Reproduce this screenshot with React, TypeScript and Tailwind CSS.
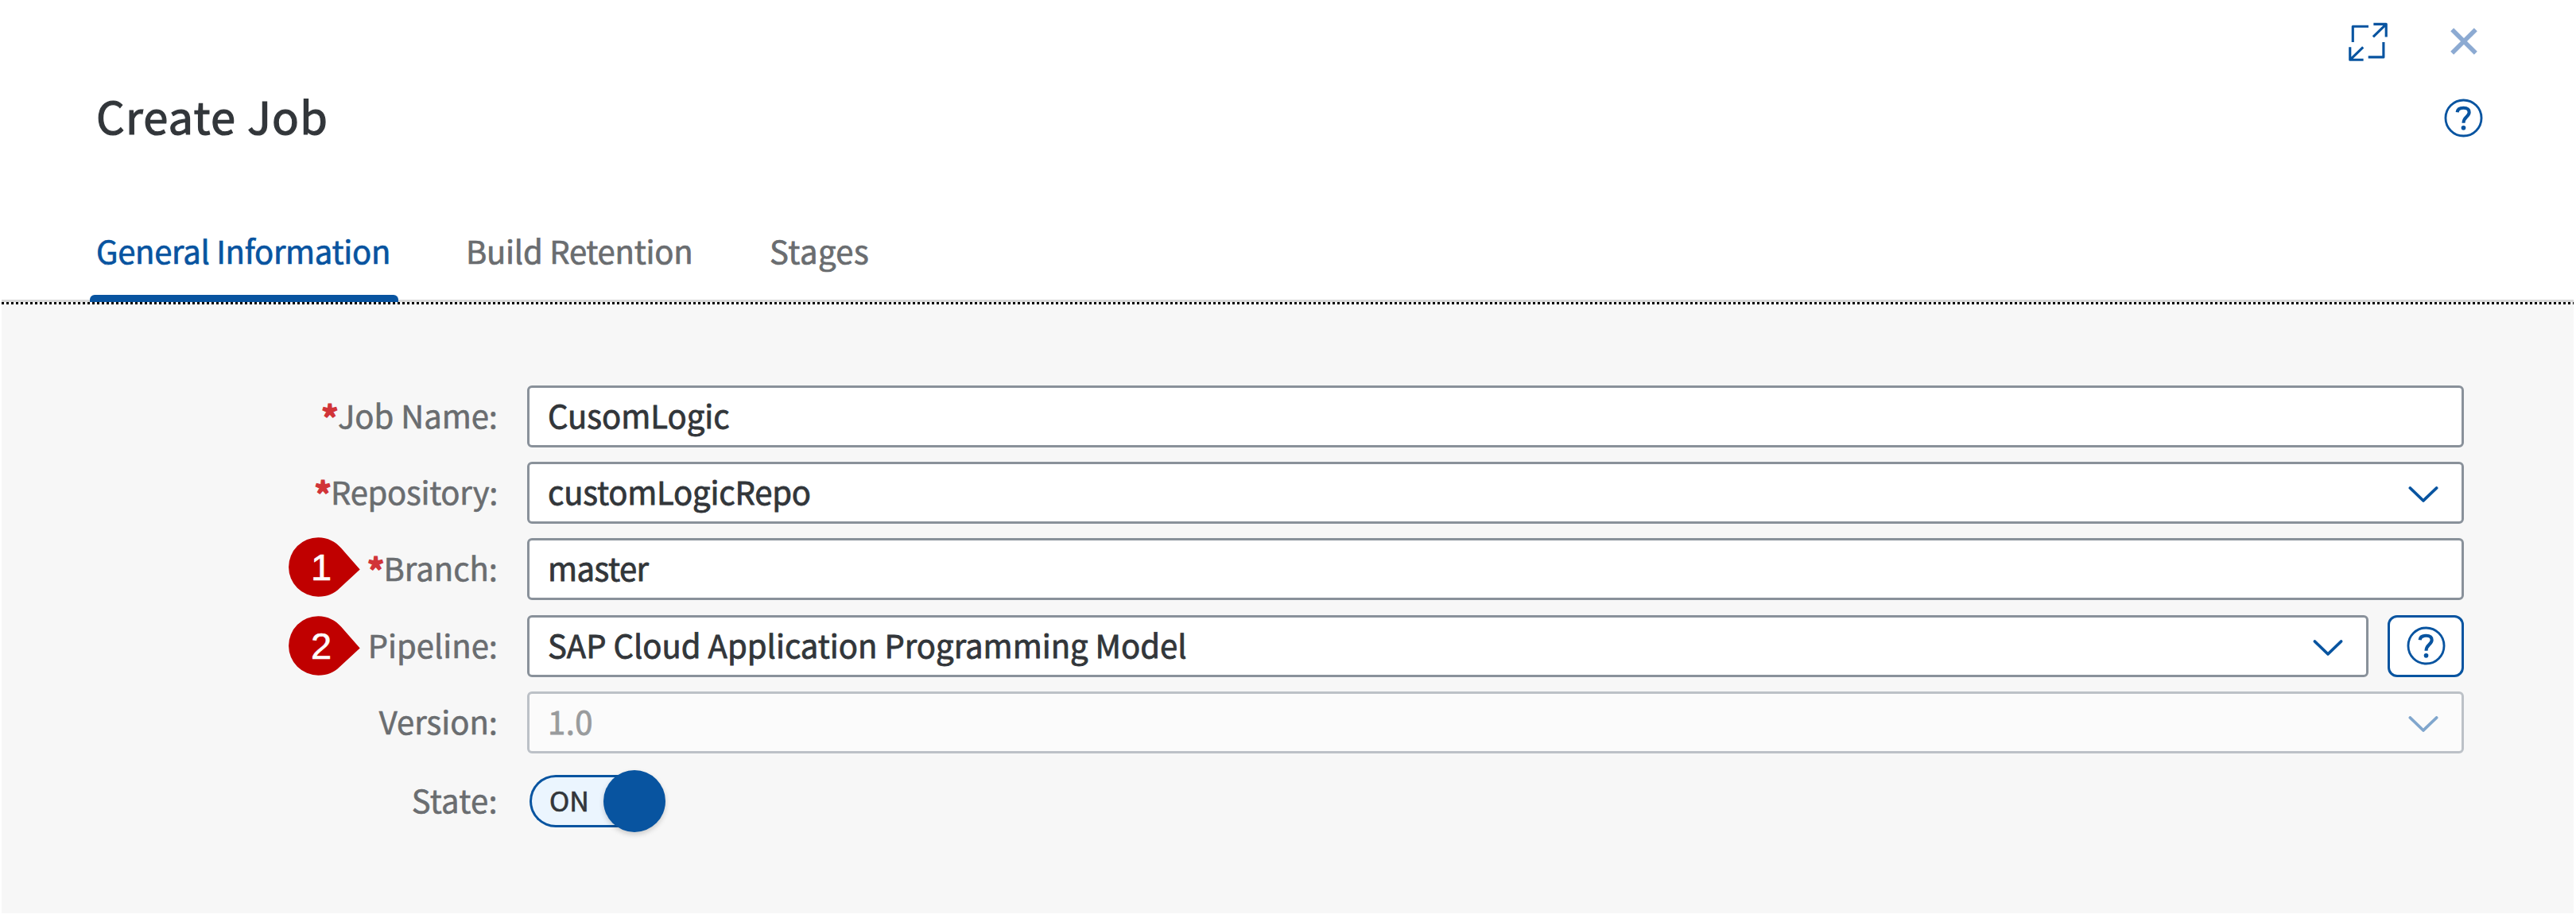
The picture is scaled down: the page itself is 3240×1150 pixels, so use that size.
import type { ReactNode } from "react";

const FONT = "font-['Noto_Sans_CJK_JP','Noto_Sans',sans-serif]";

function ExpandIcon() {
  return (
    <svg className="h-[49px] w-[49px]" viewBox="0 0 50 50" fill="none" stroke="#0854a0" strokeWidth="3.2" strokeLinecap="butt" strokeLinejoin="round">
      <path d="M5.4 25.5V5.4H25.5" />
      <path d="M32 2.4H48.2V19M48 2.6L31.5 18.7" />
      <path d="M44.8 25.5V44.8H25.2" />
      <path d="M1.8 32V48.2H19M2 48L18.6 32" />
    </svg>
  );
}

function CloseIcon() {
  return (
    <svg className="h-[34px] w-[34px]" viewBox="0 0 34 34" fill="none" stroke="#8caad2" strokeWidth="5.6">
      <path d="M2.2 2.2L31.8 31.8M31.8 2.2L2.2 31.8" />
    </svg>
  );
}

function HelpIcon() {
  return (
    <svg className="h-[49px] w-[49px]" viewBox="0 0 50 50" fill="none" stroke="#0854a0">
      <circle cx="25" cy="25" r="23" strokeWidth="2.9" />
      <path d="M17 17.6C17.3 13.6 20.6 12 25 12C29.8 12 32.3 14.2 32.3 17.6C32.3 23.2 25 23.4 25 31.4" strokeWidth="4.2" />
      <circle cx="25" cy="37.6" r="2.9" fill="#0854a0" stroke="none" />
    </svg>
  );
}

function Chevron({ faded = false }: { faded?: boolean }) {
  return (
    <svg className={`mt-[4px] h-[22px] w-[40px] ${faded ? "opacity-50" : ""}`} viewBox="0 0 40 22" fill="none" stroke="#0854a0" strokeWidth="3.8" strokeLinecap="round" strokeLinejoin="round">
      <path d="M3.4 3L20 19L36.6 3" />
    </svg>
  );
}

function Marker({ n, className }: { n: number; className: string }) {
  return (
    <div className={`absolute left-[363px] h-[75px] w-[90px] ${className}`}>
      <svg className="absolute inset-0 h-full w-full" viewBox="0 0 90 75" fill="#c00000">
        <path d="M37.3 0.2C49 0.2 59 5.5 66 13.5L89.7 40.5L64 64.2C57 71 49 74.7 37.3 74.7A37.25 37.25 0 0 1 37.3 0.2Z" />
      </svg>
      <span className="absolute left-[1px] top-0 w-[80px] text-center font-['Liberation_Sans',sans-serif] text-[47px] leading-[75px] text-white [-webkit-text-stroke:0.6px_white]">{n}</span>
    </div>
  );
}

function Row({ label, required = false, marker, tracking = "", children }: { label: string; required?: boolean; marker?: ReactNode; tracking?: string; children: ReactNode }) {
  return (
    <div className="relative flex h-[78px] items-center">
      {marker}
      <div className="flex h-[78px] w-[663px] justify-end pr-[37px] text-[40px] leading-[74px] text-[#6a6d70] [-webkit-text-stroke:0.6px_currentColor]">
        {required && <span className="-mr-px text-[43px] font-bold leading-[78px] text-[#d13438] [-webkit-text-stroke:1.4px_currentColor]">*</span>}
        <span className={tracking}>{label}</span>
      </div>
      {children}
    </div>
  );
}

function Field({ value, arrow = false, disabled = false, narrow = false, tracking = "" }: { value: string; arrow?: boolean; disabled?: boolean; narrow?: boolean; tracking?: string }) {
  return (
    <div
      className={`flex h-[78px] items-center justify-between rounded-[6px] border-[3px] pl-[23px] pr-[28px] text-[40px] leading-[72px] ${narrow ? "w-[2316px]" : "w-[2436px]"} ${
        disabled ? "border-[#bcc1c7] bg-[#fbfbfb] text-[#999b9d]" : "border-[#89919a] bg-white text-[#32363a]"
      }`}
    >
      <span className={`-mt-[4px] [-webkit-text-stroke:0.8px_currentColor] ${tracking}`}>{value}</span>
      {arrow && <Chevron faded={disabled} />}
    </div>
  );
}

export default function App() {
  return (
    <div className={`flex h-[1150px] w-[3240px] flex-col overflow-hidden bg-white ${FONT}`}>
      <header className="flex h-[380px] flex-col">
        <div className="flex h-[104px] items-center justify-end gap-[79px] pr-[124px]">
          <ExpandIcon />
          <CloseIcon />
        </div>
        <div className="flex h-[89px] items-center justify-between pl-[121px] pr-[117px]">
          <h1 className="-mt-[7px] text-[56px] leading-[90px] tracking-[1.2px] text-[#32363a] [-webkit-text-stroke:1.2px_currentColor]">Create Job</h1>
          <HelpIcon />
        </div>
        <nav className="ml-[2px] mr-[3px] flex flex-1 items-end border-b-[3px] border-[#d9d9d9] pl-[111px] text-[40px] leading-[60px] text-[#6a6d70]">
          <div className="-mb-[3px] flex h-[95px] w-[388px] flex-col justify-between pl-[8px] text-[#0854a0]">
            <span className="tracking-[-0.3px] [-webkit-text-stroke:0.7px_currentColor]">General Information</span>
            <div className="-ml-[8px] h-[9px] w-[388px] rounded-t-[6px] bg-[#0854a0]" />
          </div>
          <span className="ml-[85px] h-[92px] w-[382px] tracking-[-0.25px] [-webkit-text-stroke:0.7px_currentColor]">Build Retention</span>
          <span className="h-[92px] tracking-[0.5px] [-webkit-text-stroke:0.7px_currentColor]">Stages</span>
        </nav>
      </header>
      <div className="ml-[2px] mr-[3px] h-[3px] shrink-0 bg-[#f7f7f7] bg-[repeating-linear-gradient(90deg,#000_0_3px,transparent_3px_6px)]" />
      <main className="mb-px ml-[2px] mr-[3px] flex flex-1 flex-col bg-[#f7f7f7] pt-[102px]">
        <div className="-ml-[2px] flex flex-col gap-[18.2px]">
          <Row label="Job Name:" required>
            <Field value="CusomLogic" />
          </Row>
          <Row label="Repository:" required tracking="tracking-[-0.3px]">
            <Field value="customLogicRepo" arrow tracking="tracking-[-0.2px]" />
          </Row>
          <Row label="Branch:" required marker={<Marker n={1} className="-top-[1px]" />}>
            <Field value="master" tracking="tracking-[-0.5px]" />
          </Row>
          <Row label="Pipeline:" marker={<Marker n={2} className="top-[1px]" />}>
            <Field value="SAP Cloud Application Programming Model" arrow narrow />
            <button className="ml-[24px] flex h-[78px] w-[96px] items-center justify-center rounded-[12px] border-[3px] border-[#0854a0] bg-white">
              <HelpIcon />
            </button>
          </Row>
          <Row label="Version:">
            <Field value="1.0" arrow disabled tracking="tracking-[0.5px]" />
          </Row>
          <div className="pt-[3px]">
            <Row label="State:" tracking="tracking-[0.3px]">
              <div className="relative ml-[3px] h-[66px] w-[171px]">
                <div className="h-[66px] w-[140px] rounded-l-full border-[3px] border-r-0 border-[#0854a0] bg-[#ebf5fe] pl-[22px] text-[34px] leading-[57px] text-[#32363a] [-webkit-text-stroke:0.7px_currentColor]">ON</div>
                <div className="absolute -top-[6px] left-[93px] h-[78px] w-[78px] rounded-full bg-[#0854a0] shadow-[0_3px_6px_rgba(0,0,0,0.18)]" />
              </div>
            </Row>
          </div>
        </div>
      </main>
    </div>
  );
}
